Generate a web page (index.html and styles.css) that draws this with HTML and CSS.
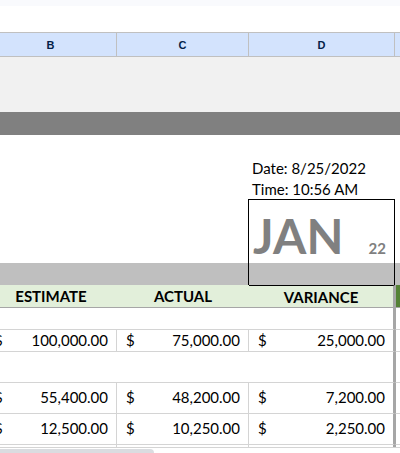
FILE: index.html
```
<!DOCTYPE html>
<html lang="en">
  <head>
    <meta charset="UTF-8" />
    <meta name="viewport" content="width=device-width, initial-scale=1.0" />
    <title>Monthly Budget</title>
    <link rel="stylesheet" href="styles.css">
  </head>
  <body>
    <div class="toolbar"></div>

    <div class="sheet">
      <table class="grid">
        <colgroup>
          <col class="col-b" />
          <col class="col-c" />
          <col class="col-d" />
          <col />
        </colgroup>
        <thead>
          <tr class="letters">
            <th>B</th>
            <th>C</th>
            <th>D</th>
            <th></th>
          </tr>
        </thead>
        <tbody>
          <tr class="title"><td colspan="4"></td></tr>
          <tr class="dark-band"><td colspan="4"></td></tr>
          <tr class="spacer"><td colspan="4"></td></tr>
          <tr class="info">
            <td colspan="2"></td>
            <td>Date: 8/25/2022</td>
            <td></td>
          </tr>
          <tr class="info">
            <td colspan="2"></td>
            <td>Time: 10:56 AM</td>
            <td></td>
          </tr>
          <tr class="month">
            <td class="box-left" colspan="2"></td>
            <td class="box-top">
              <div class="month-label">
                <span class="month-name">JAN</span>
                <span class="month-year">22</span>
              </div>
            </td>
            <td></td>
          </tr>
          <tr class="light-band">
            <td class="box-left" colspan="2"></td>
            <td class="box-right"></td>
            <td></td>
          </tr>
          <tr class="headings">
            <th>ESTIMATE</th>
            <th>ACTUAL</th>
            <th class="frozen box-bottom">VARIANCE</th>
            <td class="next"></td>
          </tr>
          <tr class="gap-small">
            <td colspan="2"></td>
            <td class="frozen"></td>
            <td class="next"></td>
          </tr>
          <tr class="total">
            <td><div class="money"><span>$</span><span>100,000.00</span></div></td>
            <td><div class="money"><span>$</span><span>75,000.00</span></div></td>
            <td class="frozen"><div class="money"><span>$</span><span>25,000.00</span></div></td>
            <td class="next"></td>
          </tr>
          <tr class="gap-large">
            <td colspan="2"></td>
            <td class="frozen"></td>
            <td class="next"></td>
          </tr>
          <tr class="item">
            <td><div class="money"><span>$</span><span>55,400.00</span></div></td>
            <td><div class="money"><span>$</span><span>48,200.00</span></div></td>
            <td class="frozen"><div class="money"><span>$</span><span>7,200.00</span></div></td>
            <td class="next"></td>
          </tr>
          <tr class="item">
            <td><div class="money"><span>$</span><span>12,500.00</span></div></td>
            <td><div class="money"><span>$</span><span>10,250.00</span></div></td>
            <td class="frozen"><div class="money"><span>$</span><span>2,250.00</span></div></td>
            <td class="next"></td>
          </tr>
          <tr class="cut">
            <td></td>
            <td></td>
            <td class="frozen"></td>
            <td class="next"></td>
          </tr>
        </tbody>
      </table>
    </div>

    <div class="scrollbar"><div class="thumb"></div></div>
  </body>
</html>
```

FILE: styles.css
```
* {
  margin: 0;
  padding: 0;
  box-sizing: border-box;
}

body {
  background-color: white;
  color: #000;
  font-family: "Century Gothic", Lato, sans-serif;
  font-size: 15px;
  line-height: 20px;
  overflow: hidden;
}

.toolbar {
  height: 32px;
  border-top: 6px solid #f9fafd;
}

.sheet {
  overflow: hidden;
}

/* column B is partly scrolled out on the left */
.grid {
  width: calc(100% + 15px);
  margin-left: -15px;
  table-layout: fixed;
  border-collapse: separate;
  border-spacing: 0;
}

.col-b,
.col-c {
  width: 132px;
}

.col-d {
  width: 146px;
}

.letters th {
  height: 25px;
  background-color: #d3e3fd;
  border: 1px solid #c0c0c0;
  border-left: none;
  color: #041e49;
  font-family: "Liberation Sans", Arial, sans-serif;
  font-size: 11px;
  line-height: 16px;
}

.letters th:last-child {
  border-right: none;
}

.title td {
  height: 55px;
  background-color: #f1f1f1;
}

.dark-band td {
  height: 23px;
  background-color: #808080;
}

.spacer td {
  height: 22px;
}

.info td {
  height: 21px;
  padding-left: 3px;
  white-space: nowrap;
}

.month td {
  height: 64px;
}

.light-band td {
  height: 22px;
  background-color: #bfbfbf;
}

.box-left,
.box-top,
.box-right {
  border-right: 1px solid #000;
}

.box-top {
  border-top: 1px solid #000;
}

.month-label {
  display: flex;
  align-items: baseline;
  justify-content: space-between;
  padding: 8px 8px 0 4px;
  color: #808080;
  font-weight: bold;
}

.month-name {
  font-size: 48px;
  line-height: 48px;
}

.headings th,
.headings td {
  height: 23px;
  background-color: #e2efda;
  border-bottom: 1px solid #a6a6a6;
  font-weight: bold;
}

.headings .box-bottom {
  border-top: 1px solid #000;
}

.headings .next {
  background-color: #548235;
}

.gap-small td {
  height: 22px;
  border-bottom: 1px solid #d4d4d4;
}

.total td {
  height: 22px;
}

.gap-large td {
  height: 31px;
  border-bottom: 1px solid #d4d4d4;
}

.item td {
  height: 31px;
}

.total td,
.item td {
  border-right: 1px solid #d4d4d4;
  border-bottom: 1px solid #d4d4d4;
}

.cut td {
  height: 2px;
  border-right: 1px solid #d4d4d4;
}

/* the freeze line straddles the edge between D and the next column */
.grid .frozen {
  border-right: 2px solid #a6a6a6;
}

.grid .next {
  border-left: 1px solid #a6a6a6;
  border-right: none;
}

.money {
  display: flex;
  justify-content: space-between;
  padding: 0 8px 2px 9px;
  line-height: 18px;
}

.scrollbar {
  height: 6px;
  padding-top: 1px;
  border-top: 1px solid #d4d4d4;
}

.thumb {
  width: 154px;
  max-width: 100%;
  height: 8px;
  background-color: #dadce0;
  border-radius: 0 4px 4px 0;
}
```
